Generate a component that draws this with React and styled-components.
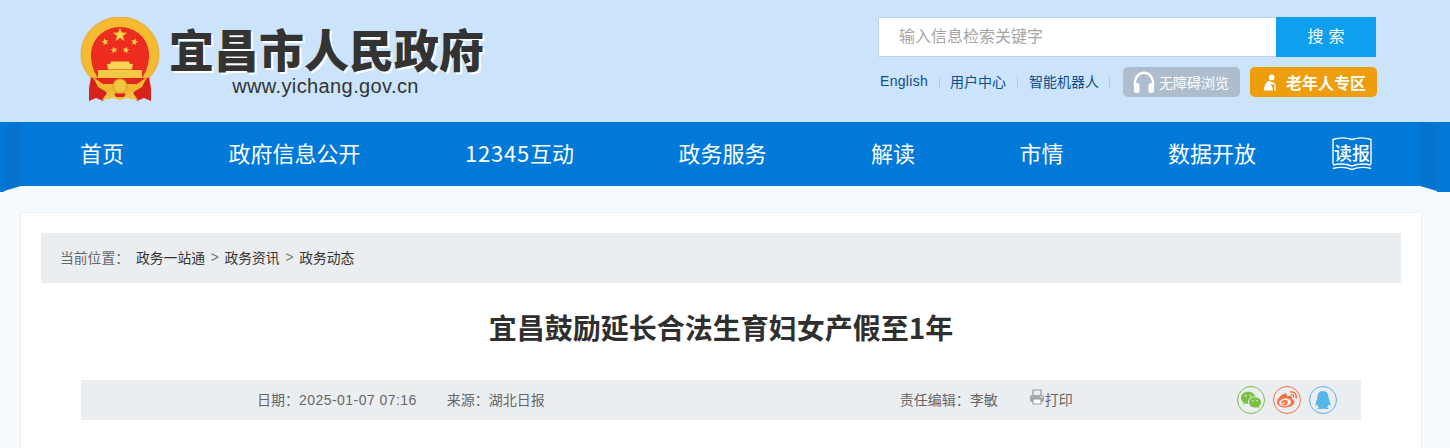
import React from "react";
import styled, { createGlobalStyle } from "styled-components";
import { RiWechatFill } from "react-icons/ri";
import { FaWeibo, FaQq } from "react-icons/fa";

const CJK = `"Noto Sans CJK SC", "Noto Sans", sans-serif`;
const LATIN_CJK = `"Liberation Sans", "Noto Sans CJK SC", sans-serif`;

const GlobalStyle = createGlobalStyle`
  html, body {
    margin: 0;
    padding: 0;
    height: 448px;
    overflow: hidden;
    background: #f5faff;
    font-family: ${CJK};
  }
`;

const Header = styled.header`
  height: 122px;
  box-sizing: border-box;
  background: #cbe3fb;
  padding: 17px 73px 0 80px;
  display: flex;
  justify-content: space-between;
  align-items: flex-start;
`;

const Logo = styled.div`
  display: flex;
  gap: 9px;
`;

const LogoText = styled.div`
  display: flex;
  flex-direction: column;
  align-items: center;
`;

const LogoTitle = styled.div`
  font-family: ${CJK};
  font-size: 45px;
  font-weight: 900;
  line-height: 46px;
  margin-top: 9px;
  color: #333;
  white-space: nowrap;
  text-shadow: 2px 2px 0 #fff;
`;

const LogoUrl = styled.div`
  font-family: "Liberation Sans", sans-serif;
  font-size: 20px;
  line-height: 24px;
  margin-top: 2px;
  padding-right: 2px;
  color: #333;
  letter-spacing: 0.39px;
`;

const Tools = styled.div`
  width: 499px;
  flex-shrink: 0;
`;

const Search = styled.div`
  display: flex;
  height: 40px;
  width: 498px;
`;

const SearchInput = styled.div`
  flex: 1;
  box-sizing: border-box;
  background: #fff;
  border: 1px solid #bcd3e8;
  border-right: 0;
  padding-left: 20px;
  font-size: 16px;
  line-height: 35px;
  color: #a5a5a5;
`;

const SearchButton = styled.div`
  width: 100px;
  background: #0ea0ee;
  color: #fff;
  font-size: 16px;
  line-height: 36px;
  text-align: center;
  letter-spacing: 5px;
  text-indent: 5px;
`;

const LinkRow = styled.div`
  display: flex;
  align-items: center;
  height: 30px;
  margin-top: 10px;
  padding-left: 2px;
`;

const TextLink = styled.a`
  font-family: ${LATIN_CJK};
  font-size: 14px;
  color: #0d4f88;
  white-space: nowrap;
  margin-bottom: 2px;
  letter-spacing: ${(p) => p.$spacing || 0}px;
`;

const Sep = styled.span`
  width: 1px;
  height: 10px;
  background: #b3c7da;
  margin: 0 ${(p) => p.$space}px;
`;

const Badge = styled.div`
  display: flex;
  align-items: center;
  flex-shrink: 0;
  height: 30px;
  border-radius: 5px;
  box-sizing: border-box;
  color: #fff;
  white-space: nowrap;
  background: ${(p) => p.$bg};
  width: ${(p) => p.$width}px;
  margin-left: ${(p) => p.$left}px;
  padding-left: ${(p) => p.$pad}px;
  gap: ${(p) => p.$gap}px;
  font-size: ${(p) => p.$size}px;
  font-weight: ${(p) => p.$weight};
`;

const Nav = styled.nav`
  position: relative;
  height: 64px;
  background: #0079d9;
  display: flex;
  align-items: center;
  padding-left: 80px;
  z-index: 1;

  &::before,
  &::after {
    content: "";
    position: absolute;
    top: 0;
    width: 17px;
    height: 70px;
    background: #0573cd;
  }
  &::before {
    left: 4px;
    clip-path: polygon(0 5px, 100% 0, 100% 64px, 0 69px);
  }
  &::after {
    left: 1420px;
    clip-path: polygon(0 0, 100% 5px, 100% 69px, 0 64px);
  }
`;

const Wing = styled.span`
  position: absolute;
  top: 6px;
  height: 64px;
  background: #0079d9;
  width: ${(p) => p.$width}px;
  left: ${(p) => p.$left}px;
`;

const NavItems = styled.div`
  display: flex;
  justify-content: space-between;
  width: 1176px;
  margin-bottom: 4px;
`;

const NavItem = styled.a`
  font-family: ${CJK};
  font-size: 22px;
  line-height: 60px;
  color: #fff;
  white-space: nowrap;
`;

const NavDigits = styled.span`
  letter-spacing: 0.8px;
`;

const ReadIcon = styled.div`
  position: relative;
  margin-left: 76px;
  width: 40px;
  height: 34px;
`;

const ReadText = styled.span`
  position: absolute;
  left: 2px;
  top: 3px;
  font-size: 18px;
  font-weight: 500;
  line-height: 24px;
  color: #fff;
  white-space: nowrap;
`;

const Page = styled.main`
  padding: 26px 0 0 20px;
`;

const Card = styled.section`
  width: 1402px;
  height: 236px;
  box-sizing: border-box;
  background: #fff;
  border: 1px solid #eef1f4;
  border-bottom: 0;
  padding: 20px 20px 0;
`;

const Crumbs = styled.div`
  height: 50px;
  box-sizing: border-box;
  background: #ebeef1;
  padding: 0 0 2px 19px;
  display: flex;
  align-items: center;
  font-size: 13.8px;
  color: #333;
  white-space: nowrap;
`;

const CrumbLabel = styled.span`
  color: #666;
  width: 76px;
`;

const CrumbArrow = styled.span`
  font-family: "Liberation Sans", sans-serif;
  color: #777;
  margin: 0 5.25px;
  width: 9px;
  text-align: center;
`;

const Title = styled.h1`
  margin: 0;
  padding-top: 24px;
  height: 97px;
  box-sizing: border-box;
  font-family: ${CJK};
  font-size: 28px;
  font-weight: 700;
  line-height: 40px;
  color: #2f2f2f;
  text-align: center;
`;

const MetaBar = styled.div`
  margin: 0 40px;
  height: 40px;
  background: #ebeef1;
  display: flex;
  align-items: center;
  padding-left: 176px;
  font-size: 14px;
  color: #666;
  white-space: nowrap;
`;

const MetaText = styled.span`
  font-family: ${LATIN_CJK};
  margin-left: ${(p) => p.$left || 0}px;
  margin-bottom: 2px;
`;

const DateValue = styled.span`
  letter-spacing: 0.45px;
`;

const PrintBox = styled.span`
  display: flex;
  align-items: center;
  margin-left: 31px;
`;

const PrintIcon = styled.svg`
  width: 16px;
  height: 16px;
  margin-bottom: 7px;
`;

const Socials = styled.div`
  display: flex;
  gap: 8px;
  margin-left: 164px;
`;

const Social = styled.span`
  width: 28px;
  height: 28px;
  box-sizing: border-box;
  border-radius: 50%;
  border: 1px solid ${(p) => p.$color};
  color: ${(p) => p.$color};
  display: flex;
  align-items: center;
  justify-content: center;
`;

const Star = ({ cx, cy, r, rot = 0 }) => {
  const pts = [];
  for (let i = 0; i < 10; i++) {
    const rad = i % 2 ? r * 0.4 : r;
    const a = ((-90 + rot + i * 36) * Math.PI) / 180;
    pts.push(`${(cx + rad * Math.cos(a)).toFixed(2)},${(cy + rad * Math.sin(a)).toFixed(2)}`);
  }
  return <polygon points={pts.join(" ")} fill="#f9d648" />;
};

const Emblem = () => (
  <svg width="80" height="85" viewBox="0 0 80 85">
    {/* gold ring */}
    <path d="M40 0 C62 0 79 17 79 37 C79 47 75 55 68 62 L54 72 H26 L12 62 C5 55 1 47 1 37 C1 17 18 0 40 0 Z" fill="#f4bb32" stroke="#e3a42c" strokeWidth="0.8" />
    <path d="M40 10 C56 10 69 22 69 38 C69 48 66 55 62 61 L18 61 C14 55 11 48 11 38 C11 22 24 10 40 10 Z" fill="#ec2c1f" />
    <Star cx={40} cy={18} r={7.5} />
    <Star cx={25} cy={25} r={3.8} rot={-15} />
    <Star cx={54.5} cy={25} r={3.8} rot={15} />
    <Star cx={34} cy={33} r={3.6} rot={-10} />
    <Star cx={46} cy={33} r={3.6} rot={10} />
    {/* gate */}
    <path d="M31 44.5 H49 L50 47 H53 L52 52.5 H28 L27 47 H30 Z" fill="#f8d552" />
    <rect x="18" y="53" width="44" height="8" fill="#f6cb44" />
    <path d="M14 61 H66 L62 67 H18 Z" fill="#e3261d" />
    {/* ribbons */}
    <path d="M11 60 L24 68 L27 77 L23 84 L16 81 L9 84 L9 71 Z" fill="#d8231c" />
    <path d="M69 60 L56 68 L53 77 L57 84 L64 81 L71 84 L71 71 Z" fill="#d8231c" />
    <path d="M13 60 L26 69 H54 L67 60 L62 70 L52 76 H28 L18 70 Z" fill="#f0b92f" />
    <circle cx="40" cy="69" r="7" fill="#f4c63f" stroke="#d9962a" strokeWidth="1" />
    <path d="M27 76 H53 L58 83 L46 81 L40 83.5 L34 81 L22 83 Z" fill="#f2c23e" />
    <path d="M34 76.5 H46 L44 80 H36 Z" fill="#d8231c" />
  </svg>
);

const Headphones = () => (
  <svg width="22" height="22" viewBox="0 0 22 22" fill="#fff">
    <path d="M0.5 14 C0.5 5.5 5 0.5 11 0.5 C17 0.5 21.5 5.5 21.5 14 L19.2 14 C19.2 7 15.5 2.9 11 2.9 C6.5 2.9 2.8 7 2.8 14 Z" />
    <rect x="1" y="12" width="5.5" height="10" rx="2" />
    <rect x="15.5" y="12" width="5.5" height="10" rx="2" />
  </svg>
);

const Elder = () => (
  <svg width="14" height="17" viewBox="0 0 16 20" fill="#fff">
    <circle cx="10" cy="4" r="3.4" />
    <path d="M7 8 C3 9 1.5 14 0.5 19.5 H11 C11.5 16.5 10.5 13.5 8.5 12 L13 12.5 L13.6 10.6 L9 9.2 Z" />
    <rect x="13" y="12" width="1.6" height="7.5" />
  </svg>
);

const BookFrame = () => (
  <svg width="40" height="34" viewBox="0 0 40 34" fill="none" stroke="#fff" strokeWidth="1.4">
    <path d="M1 27 V2.5 C7 0.5 14 0.5 20 2.5 C26 0.5 33 0.5 39 2.5 V27" />
    <path d="M1 28 C7 26.6 14 26.6 20 29 C26 26.6 33 26.6 39 28" />
    <path d="M0.8 31.5 C7 30 14 30 20 32.5 C26 30 33 30 39.2 31.5" />
  </svg>
);

const PrinterGlyph = () => (
  <PrintIcon viewBox="0 0 16 16">
    <path d="M4 6 V1 H12 V6" fill="none" stroke="#999" strokeWidth="1.2" />
    <rect x="1" y="6" width="14" height="7" rx="2" fill="#a6a6a6" />
    <rect x="4" y="10" width="8" height="5" fill="#fff" stroke="#999" />
    <rect x="11.5" y="7.5" width="2" height="1.2" fill="#fff" />
  </PrintIcon>
);

export default function App() {
  return (
    <>
      <GlobalStyle />
      <Header>
        <Logo>
          <Emblem />
          <LogoText>
            <LogoTitle>宜昌市人民政府</LogoTitle>
            <LogoUrl>www.yichang.gov.cn</LogoUrl>
          </LogoText>
        </Logo>
        <Tools>
          <Search>
            <SearchInput>输入信息检索关键字</SearchInput>
            <SearchButton>搜索</SearchButton>
          </Search>
          <LinkRow>
            <TextLink $spacing={0.3}>English</TextLink>
            <Sep $space={10.5} />
            <TextLink>用户中心</TextLink>
            <Sep $space={11} />
            <TextLink>智能机器人</TextLink>
            <Sep $space={10} />
            <Badge $bg="#aebdcd" $width={117} $left={3} $pad={10} $gap={4} $size={14} $weight={400}>
              <Headphones />
              无障碍浏览
            </Badge>
            <Badge $bg="#ee9d0d" $width={127} $left={10} $pad={13} $gap={9} $size={16} $weight={700}>
              <Elder />
              老年人专区
            </Badge>
          </LinkRow>
        </Tools>
      </Header>
      <Nav>
        <Wing $left={0} $width={4} />
        <Wing $left={1437} $width={13} />
        <NavItems>
          <NavItem>首页</NavItem>
          <NavItem>政府信息公开</NavItem>
          <NavItem><NavDigits>12345</NavDigits>互动</NavItem>
          <NavItem>政务服务</NavItem>
          <NavItem>解读</NavItem>
          <NavItem>市情</NavItem>
          <NavItem>数据开放</NavItem>
        </NavItems>
        <ReadIcon>
          <BookFrame />
          <ReadText>读报</ReadText>
        </ReadIcon>
      </Nav>
      <Page>
        <Card>
          <Crumbs>
            <CrumbLabel>当前位置：</CrumbLabel>
            <span>政务一站通</span>
            <CrumbArrow>&gt;</CrumbArrow>
            <span>政务资讯</span>
            <CrumbArrow>&gt;</CrumbArrow>
            <span>政务动态</span>
          </Crumbs>
          <Title>宜昌鼓励延长合法生育妇女产假至1年</Title>
          <MetaBar>
            <MetaText>日期：<DateValue>2025-01-07 07:16</DateValue></MetaText>
            <MetaText $left={30}>来源：湖北日报</MetaText>
            <MetaText $left={355}>责任编辑：李敏</MetaText>
            <PrintBox>
              <PrinterGlyph />
              <MetaText>打印</MetaText>
            </PrintBox>
            <Socials>
              <Social $color="#7ac143"><RiWechatFill size={22} /></Social>
              <Social $color="#fb6f3c"><FaWeibo size={20} /></Social>
              <Social $color="#55b4e8"><FaQq size={18} /></Social>
            </Socials>
          </MetaBar>
        </Card>
      </Page>
    </>
  );
}
